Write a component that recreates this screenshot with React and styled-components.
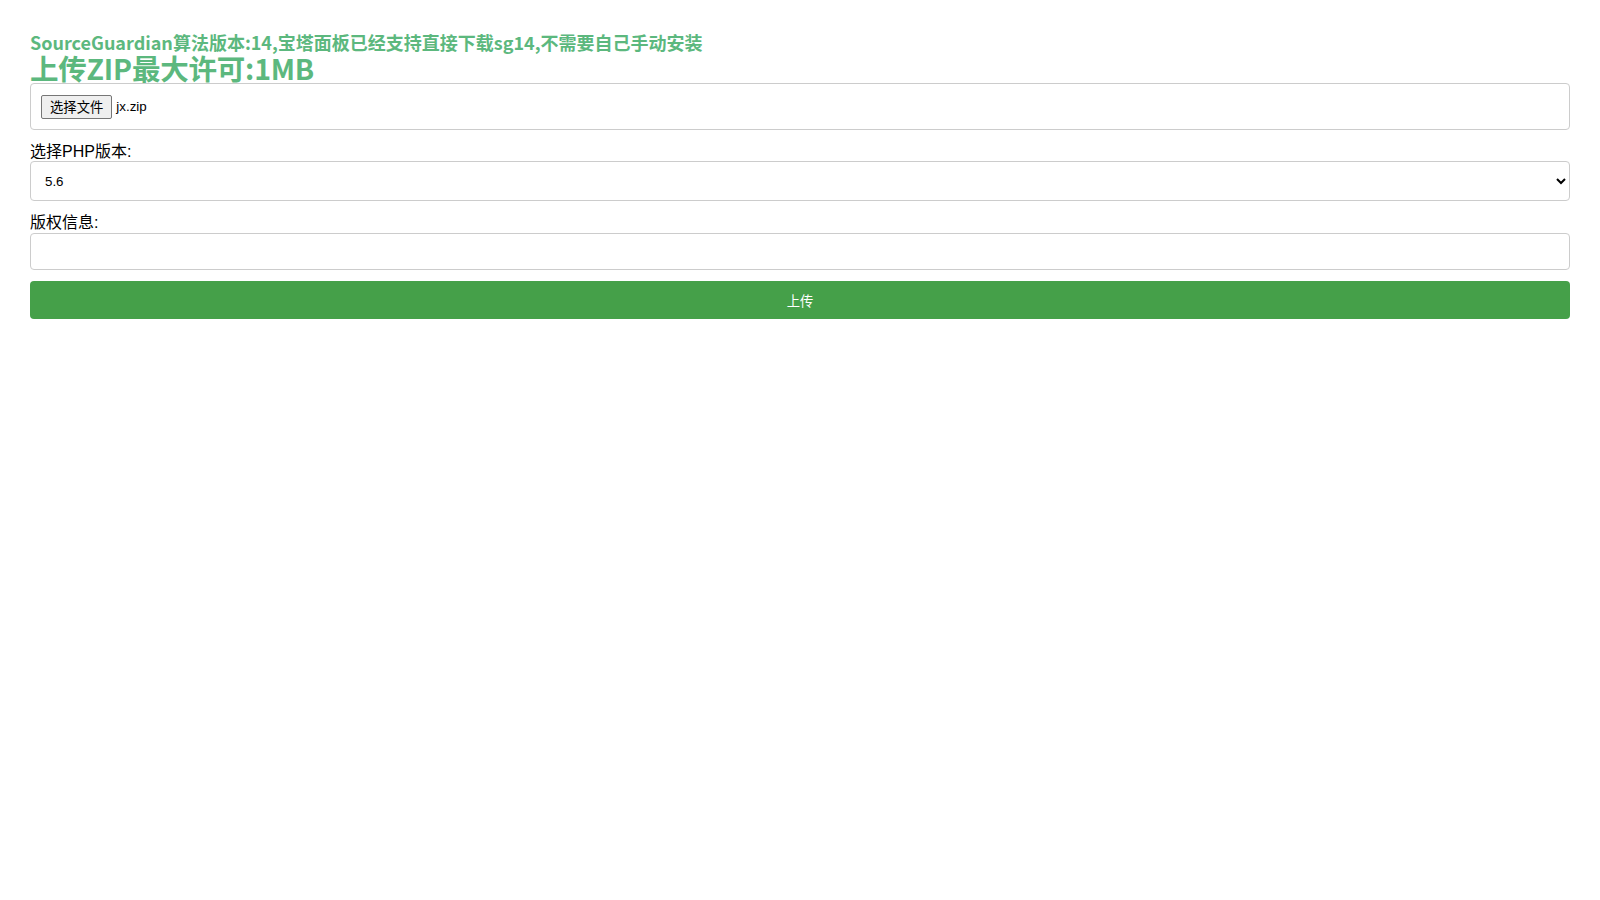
import styled, { createGlobalStyle } from "styled-components";

const GlobalStyle = createGlobalStyle`
    body {
        margin: 0;
        background: #fff;
        font-family: "Liberation Sans", Arial, "Noto Sans CJK SC", sans-serif;
        color: #000;
    }
`;

const Upload = () => {
    return (
        <>
            <GlobalStyle />
            <Container>
                <Notice>SourceGuardian算法版本:14,宝塔面板已经支持直接下载sg14,不需要自己手动安装</Notice>
                <Title>上传ZIP最大许可:1MB</Title>
                <Form onSubmit={(e) => e.preventDefault()}>
                    <FileField>
                        <FileButton type="button">选择文件</FileButton>
                        <FileName>jx.zip</FileName>
                    </FileField>
                    <Label htmlFor="php">选择PHP版本:</Label>
                    <Select id="php" defaultValue="5.6">
                        <option value="5.6">5.6</option>
                        <option value="7.0">7.0</option>
                        <option value="7.1">7.1</option>
                        <option value="7.2">7.2</option>
                        <option value="7.3">7.3</option>
                        <option value="7.4">7.4</option>
                    </Select>
                    <Label htmlFor="copyright">版权信息:</Label>
                    <TextInput id="copyright" type="text" />
                    <SubmitButton type="submit">上传</SubmitButton>
                </Form>
            </Container>
        </>
    );
};

export default Upload;

const Container = styled.div`
    padding: 31px 30px 0 30px;
`

const Notice = styled.h3`
    margin: 0;
    color: #5cb87e;
    font-family: "Noto Sans CJK SC", "Liberation Sans", sans-serif;
    font-size: 18px;
    font-weight: 700;
    line-height: 22px;
`

const Title = styled.h2`
    margin: 0;
    color: #5cb87e;
    font-family: "Noto Sans CJK SC", "Liberation Sans", sans-serif;
    font-size: 28.5px;
    font-weight: 700;
    line-height: 30px;
    letter-spacing: -0.2px;
`

const Form = styled.form`
    display: flex;
    flex-direction: column;
`

const FileField = styled.div`
    display: flex;
    align-items: center;
    gap: 4px;
    height: 47px;
    box-sizing: border-box;
    padding: 0 10px;
    border: 1px solid #ccc;
    border-radius: 4px;
`

const FileButton = styled.button`
    height: 24px;
    padding: 0 8px;
    border: 1px solid #767676;
    border-radius: 2px;
    background: #efefef;
    font-family: "Liberation Sans", "Noto Sans CJK SC", sans-serif;
    font-size: 13.33px;
    color: #000;
`

const FileName = styled.span`
    font-family: "Liberation Sans", sans-serif;
    font-size: 13.33px;
`

const Label = styled.label`
    display: block;
    margin: 12px 0 0;
    font-size: 16px;
    line-height: 19px;
`

const Select = styled.select`
    height: 40px;
    box-sizing: border-box;
    padding: 0 10px;
    border: 1px solid #ccc;
    border-radius: 4px;
    background: #fff;
    font-family: "Liberation Sans", sans-serif;
    font-size: 13.33px;
    color: #000;
`

const TextInput = styled.input`
    height: 37px;
    box-sizing: border-box;
    margin-top: 1px;
    padding: 0 10px;
    border: 1px solid #ccc;
    border-radius: 4px;
    font-family: "Liberation Sans", sans-serif;
    font-size: 13.33px;
`

const SubmitButton = styled.button`
    height: 38px;
    margin-top: 11px;
    border: none;
    border-radius: 4px;
    background: #45a049;
    color: #fff;
    font-family: "Liberation Sans", "Noto Sans CJK SC", sans-serif;
    font-size: 13.33px;
    cursor: pointer;
`
